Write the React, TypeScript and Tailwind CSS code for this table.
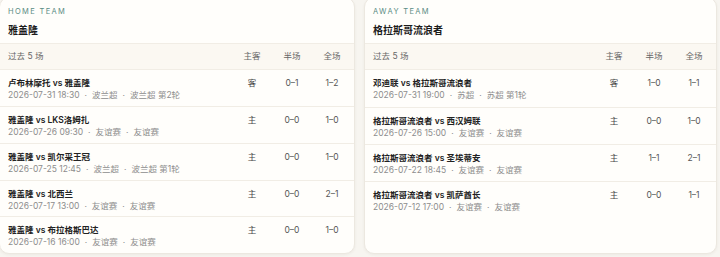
import React from 'react';

type Match = {
  teams: [string, string];
  date: string;
  meta: string[];
  side: string;
  half: string;
  full: string;
};

const homeMatches: Match[] = [
  { teams: ['卢布林摩托', '雅盖隆'], date: '2026-07-31 18:30', meta: ['波兰超', '波兰超 第2轮'], side: '客', half: '0–1', full: '1–2' },
  { teams: ['雅盖隆', 'LKS洛姆扎'], date: '2026-07-26 09:30', meta: ['友谊赛', '友谊赛'], side: '主', half: '0–0', full: '1–0' },
  { teams: ['雅盖隆', '凯尔采王冠'], date: '2026-07-25 12:45', meta: ['波兰超', '波兰超 第1轮'], side: '主', half: '0–0', full: '1–0' },
  { teams: ['雅盖隆', '北西兰'], date: '2026-07-17 13:00', meta: ['友谊赛', '友谊赛'], side: '主', half: '0–0', full: '2–1' },
  { teams: ['雅盖隆', '布拉格斯巴达'], date: '2026-07-16 16:00', meta: ['友谊赛', '友谊赛'], side: '主', half: '0–0', full: '1–0' },
];

const awayMatches: Match[] = [
  { teams: ['邓迪联', '格拉斯哥流浪者'], date: '2026-07-31 19:00', meta: ['苏超', '苏超 第1轮'], side: '客', half: '1–0', full: '1–1' },
  { teams: ['格拉斯哥流浪者', '西汉姆联'], date: '2026-07-26 15:00', meta: ['友谊赛', '友谊赛'], side: '主', half: '0–0', full: '1–0' },
  { teams: ['格拉斯哥流浪者', '圣埃蒂安'], date: '2026-07-22 18:45', meta: ['友谊赛', '友谊赛'], side: '主', half: '1–1', full: '2–1' },
  { teams: ['格拉斯哥流浪者', '凯萨酋长'], date: '2026-07-12 17:00', meta: ['友谊赛', '友谊赛'], side: '主', half: '0–0', full: '1–1' },
];

function TeamCard({ label, name, matches, className }: { label: string; name: string; matches: Match[]; className: string }) {
  return (
    <div className={`flex flex-col rounded-[10px] border border-[#ece8e0] bg-[#fffefb] shadow-[0_1px_3px_rgba(60,50,30,0.06)] overflow-hidden ${className}`}>
      <div className="px-[8px] pt-[9px] pb-[6px]">
        <div className="text-[7.5px] leading-[10px] tracking-[0.18em] text-[#5a8c84]">{label}</div>
        <div className="mt-[6px] text-[10px] leading-[14px] font-bold text-[#1c1c1c]">{name}</div>
      </div>
      <div className="flex items-center h-[27px] bg-[#fbf8f2] border-y border-[#f1ede5] pl-[8px] pr-[2px] text-[8.5px] text-[#666]">
        <div className="flex-1">过去 5 场</div>
        <div className="w-[40px] text-center">主客</div>
        <div className="w-[40px] text-center">半场</div>
        <div className="w-[40px] text-center">全场</div>
      </div>
      {matches.map((m, i) => (
        <div key={i} className={`flex items-start h-[37px] pt-[7px] pl-[8px] pr-[2px] ${i > 0 ? 'border-t border-[#f1ede5]' : ''}`}>
          <div className="flex-1 min-w-0">
            <div className="text-[8.5px] leading-[12px] font-semibold text-[#222]">
              {m.teams[0]} vs {m.teams[1]}
            </div>
            <div className="mt-[1px] flex items-center text-[8.5px] leading-[11px] text-[#8d8d8d]">
              <span>{m.date}</span>
              {m.meta.map((t, j) => (
                <React.Fragment key={j}>
                  <span className="mx-[5px]">·</span>
                  <span>{t}</span>
                </React.Fragment>
              ))}
            </div>
          </div>
          <div className="w-[40px] text-center text-[8.5px] leading-[12px] text-[#444]">{m.side}</div>
          <div className="w-[40px] text-center text-[8.5px] leading-[12px] text-[#555]">{m.half}</div>
          <div className="w-[40px] text-center text-[8.5px] leading-[12px] text-[#555]">{m.full}</div>
        </div>
      ))}
    </div>
  );
}

export default function App() {
  return (
    <div
      className="w-[720px] h-[257px] overflow-hidden bg-[#f7f5f0]"
      style={{ fontFamily: 'Inter, "Noto Sans CJK SC", sans-serif' }}
    >
      <div className="flex items-start gap-[9px] -mt-[3px] -ml-[1px]">
        <TeamCard label="HOME TEAM" name="雅盖隆" matches={homeMatches} className="w-[356px] h-[257px]" />
        <TeamCard label="AWAY TEAM" name="格拉斯哥流浪者" matches={awayMatches} className="w-[353px] h-[257px]" />
      </div>
    </div>
  );
}
